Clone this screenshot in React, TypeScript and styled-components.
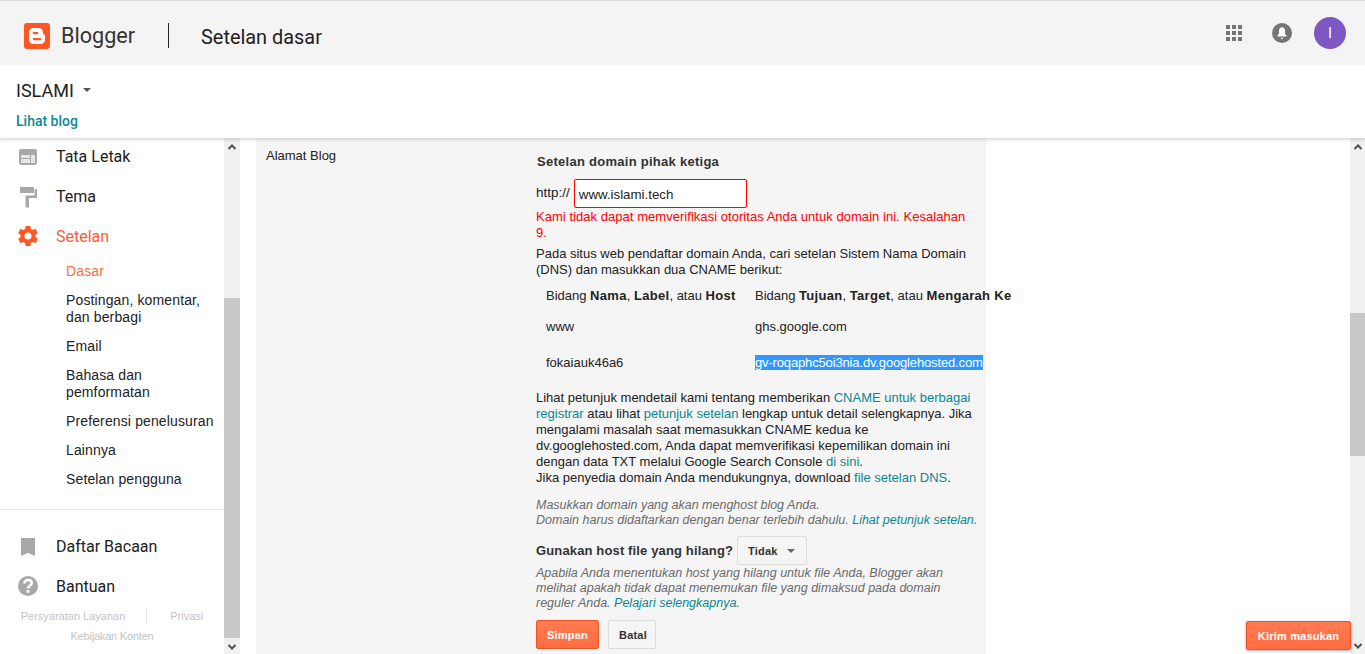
import { createGlobalStyle, styled } from "styled-components";

const GlobalStyle = createGlobalStyle`
  html, body {
    margin: 0;
    padding: 0;
    height: 100%;
    overflow: hidden;
    background: #fff;
  }
  #root {
    height: 100%;
  }
  * {
    box-sizing: border-box;
  }
`;

const Page = styled.div`
  height: 654px;
  display: flex;
  flex-direction: column;
  position: relative;
  overflow: hidden;
  font-family: "Liberation Sans", Arial, sans-serif;
  color: #222;
`;

const TopBar = styled.header`
  height: 65px;
  flex: none;
  display: flex;
  align-items: center;
  background: #f4f4f4;
  border-top: 1px solid #ddd;
  padding: 0 19px 0 24px;
`;

const Brand = styled.div`
  display: flex;
  align-items: center;
  padding-top: 5px;
`;

const LogoName = styled.span`
  font: 400 21.6px Roboto, sans-serif;
  color: #333;
  margin-left: 11px;
`;

const TitleDivider = styled.span`
  width: 1px;
  height: 25px;
  background: #222;
  margin-left: 33px;
`;

const PageTitle = styled.h1`
  margin: 3px 0 0 32px;
  font: 400 19.9px Roboto, sans-serif;
  color: #212121;
`;

const TopActions = styled.div`
  margin-left: auto;
  display: flex;
  align-items: center;
  gap: 30px;
`;

const Avatar = styled.div`
  width: 32px;
  height: 32px;
  border-radius: 50%;
  background: #7e57c2;
  color: #fff;
  font: 400 15px Roboto, sans-serif;
  display: flex;
  align-items: center;
  justify-content: center;
  margin-left: -8px;
`;

const SubHeader = styled.div`
  height: 73px;
  flex: none;
  background: #fff;
  box-shadow: 0 2px 3px rgba(0, 0, 0, 0.14);
  padding: 13px 16px 0;
  position: relative;
  z-index: 2;
`;

const BlogPicker = styled.div`
  display: flex;
  align-items: center;
  gap: 9px;
  font: 400 18px Roboto, sans-serif;
  color: #222;
  height: 24px;
`;

const Caret = styled.span<{ $color?: string }>`
  width: 0;
  height: 0;
  border-left: 4px solid transparent;
  border-right: 4px solid transparent;
  border-top: 4px solid ${(p) => p.$color ?? "#555"};
`;

const ViewLink = styled.a`
  display: block;
  margin-top: 11px;
  font: 500 14px Roboto, sans-serif;
  color: #0d8a94;
`;

const Body = styled.div`
  flex: 1;
  min-height: 0;
  display: flex;
`;

const Sidebar = styled.nav`
  width: 224px;
  flex: none;
  display: flex;
  flex-direction: column;
`;

const NavItem = styled.div<{ $active?: boolean }>`
  height: 40px;
  display: flex;
  align-items: center;
  gap: 16px;
  padding-left: 16px;
  font: 400 16px Roboto, sans-serif;
  color: ${(p) => (p.$active ? "#ff5a36" : "#212121")};
`;

const IconSlot = styled.span`
  width: 24px;
  height: 24px;
  flex: none;
  display: flex;
`;

const NavTop = styled.div`
  margin-top: -2px;
`;

const SubNav = styled.div`
  padding: 7px 0 0 66px;
  display: flex;
  flex-direction: column;
  gap: 12px;
`;

const SubItem = styled.div<{ $active?: boolean }>`
  font: 14px/17px "Liberation Sans", Arial, sans-serif;
  letter-spacing: 0.13px;
  color: ${(p) => (p.$active ? "#ff6d42" : "#222")};
`;

const SideRule = styled.div`
  height: 1px;
  background: #e8e8e8;
  margin-top: 21px;
  margin-bottom: 16px;
`;

const LegalRow = styled.div<{ $spacing: number }>`
  display: flex;
  justify-content: center;
  align-items: center;
  font: 11px "Liberation Sans", Arial, sans-serif;
  letter-spacing: ${(p) => p.$spacing}px;
  color: #c4c4c4;
  height: 20px;
`;

const LegalDivider = styled.span`
  width: 1px;
  height: 14px;
  background: #e4e4e4;
  margin: 0 23px 0 21px;
`;

const Scrollbar = styled.div<{ $width: number }>`
  width: ${(p) => p.$width}px;
  flex: none;
  background: #f1f1f1;
  display: flex;
  flex-direction: column;
`;

const ScrollArrow = styled.div`
  height: 17px;
  flex: none;
  display: flex;
  align-items: center;
  justify-content: center;
`;

const ScrollTrack = styled.div`
  flex: 1;
  display: flex;
  flex-direction: column;
`;

const ScrollSpace = styled.div<{ $size: number }>`
  height: ${(p) => p.$size}px;
  flex: none;
`;

const ScrollThumb = styled.div<{ $size: number }>`
  height: ${(p) => p.$size}px;
  flex: none;
  background: #c8c8c8;
`;

const Main = styled.main`
  flex: 1;
  min-width: 0;
  padding-left: 16px;
`;

const Panel = styled.section`
  width: 730px;
  height: 100%;
  background: #f5f5f5;
  display: grid;
  grid-template-columns: 280px 450px;
  font: 13px/16px "Liberation Sans", Arial, sans-serif;
`;

const FieldLabel = styled.div`
  padding: 10px 0 0 10px;
  font-size: 13px;
  color: #222;
`;

const FieldBody = styled.div`
  padding-top: 16px;
  color: #222;
`;

const DomainHeading = styled.h2`
  margin: 0 0 0 1px;
  font: 700 13px/16px "Liberation Sans", Arial, sans-serif;
  letter-spacing: 0.27px;
  color: #333;
`;

const UrlRow = styled.div`
  margin-top: 9px;
  display: flex;
  align-items: flex-start;
  gap: 4px;
  height: 29px;
  line-height: 18px;
  font-size: 13.5px;
`;

const UrlPrefix = styled.span`
  padding-top: 5px;
`;

const DomainInput = styled.div`
  width: 173px;
  height: 29px;
  background: #fff;
  border: 1px solid #f00;
  border-radius: 2px;
  padding: 7px 4px 0;
  font-size: 13.3px;
  line-height: 16px;
  color: #222;
`;

const ErrorText = styled.p`
  margin: 1px 0 0;
  color: #f00;
  width: 440px;
  letter-spacing: 0.04px;
`;

const Para = styled.p`
  margin: 5px 0 0;
  width: 440px;
`;

const DnsTable = styled.div`
  margin-top: 10px;
  padding-left: 10px;
  display: grid;
  grid-template-columns: 209px max-content;
  grid-template-rows: 31px 36px 31px;
`;

const DnsCell = styled.div`
  white-space: nowrap;

  b {
    letter-spacing: 0.3px;
  }
`;

const Selected = styled.span`
  background: #3297fd;
  color: #fff;
  letter-spacing: -0.15px;
`;

const Link = styled.a`
  color: #0b8793;
`;

const Instructions = styled.p`
  margin: 4px 0 0;
  width: 440px;
`;

const Hint = styled.p<{ $gap: number }>`
  margin: ${(p) => p.$gap}px 0 0;
  width: 442px;
  font-size: 12.5px;
  line-height: 15px;
  font-style: italic;
  color: #6b6b6b;
`;

const HostRow = styled.div`
  margin-top: 8px;
  display: flex;
  align-items: center;
  gap: 4px;
  font: 700 13px/16px "Liberation Sans", Arial, sans-serif;
  letter-spacing: 0.14px;
  color: #333;
`;

const Button = styled.button<{ $primary?: boolean }>`
  height: 29px;
  padding: 0 10px;
  font: 700 11px "Liberation Sans", Arial, sans-serif;
  letter-spacing: 0.2px;
  border-radius: 2px;
  border: 1px solid ${(p) => (p.$primary ? "#f4511e" : "#dcdcdc")};
  background: ${(p) => (p.$primary ? "linear-gradient(#ff7b52, #ff6d42)" : "#f5f5f5")};
  color: ${(p) => (p.$primary ? "#fff" : "#333")};
`;

const SelectButton = styled(Button)`
  width: 70px;
  display: flex;
  align-items: center;
  gap: 9px;
`;

const Actions = styled.div`
  margin-top: 9px;
  display: flex;
  gap: 9px;
`;

const PrimaryWide = styled(Button)`
  width: 63px;
`;

const SecondaryWide = styled(Button)`
  width: 48px;
`;

const Gutter = styled.div`
  width: 364px;
  flex: none;
`;

const FeedbackButton = styled.button`
  position: absolute;
  right: 14px;
  bottom: 4px;
  width: 105px;
  height: 29px;
  border: 1px solid #f4511e;
  border-radius: 2px;
  background: linear-gradient(#ff7b52, #ff6d42);
  box-shadow: 0 1px 3px rgba(0, 0, 0, 0.35);
  color: #fff;
  font: 700 11px "Liberation Sans", Arial, sans-serif;
  letter-spacing: 0.2px;
`;

function Chevron({ up }: { up?: boolean }) {
  return (
    <svg width="10" height="8" viewBox="0 0 10 8">
      <path d={up ? "M1.5 6 5 2.5 8.5 6" : "M1.5 2 5 5.5 8.5 2"} fill="none" stroke="#505050" strokeWidth="2" />
    </svg>
  );
}

function BloggerLogo() {
  return (
    <svg width="26" height="26" viewBox="0 0 26 26">
      <rect width="26" height="26" rx="3" fill="#ff5722" />
      <path
        fill="#fff"
        fillRule="evenodd"
        d="M9.5 5h5c2.6 0 4.5 1.9 4.5 4.2v1.1c0 .6.4 1 1 1.1.6.1 1 .5 1 1.1v4.3c0 2.4-2 4.2-4.5 4.2h-7C7 21 5 19.2 5 16.8V9.4C5 7 7 5 9.5 5ZM9.8 9a1 1 0 0 0 0 2.2h3.5a1.1 1.1 0 0 0 0-2.2ZM9.8 15a1 1 0 0 0 0 2.2h6.4a1.1 1.1 0 0 0 0-2.2Z"
      />
    </svg>
  );
}

function AppsIcon() {
  const cells = [0, 1, 2].flatMap((r) => [0, 1, 2].map((c) => [c * 6, r * 6]));
  return (
    <svg width="16" height="16" viewBox="0 0 16 16">
      {cells.map(([x, y]) => (
        <rect key={`${x}-${y}`} x={x} y={y} width="4" height="4" fill="#757575" />
      ))}
    </svg>
  );
}

function BellIcon() {
  return (
    <svg width="20" height="20" viewBox="0 0 20 20">
      <circle cx="10" cy="10" r="10" fill="#757575" />
      <path
        fill="#fff"
        d="M10 4.2c-1.8 0-3 1.4-3 3.3v3.3l-1.5 2v.7h9v-.7l-1.5-2V7.5c0-1.9-1.2-3.3-3-3.3ZM8.8 14.8a1.2 1.2 0 0 0 2.4 0Z"
      />
    </svg>
  );
}

function LayoutIcon() {
  return (
    <IconSlot>
      <svg width="24" height="24" viewBox="0 0 24 24">
        <rect x="3" y="5" width="18" height="16" rx="2" fill="#a8a8a8" />
        <rect x="5" y="11" width="9" height="3" fill="#e6e6e6" />
        <rect x="5" y="15" width="9" height="4" fill="#e6e6e6" />
        <rect x="15" y="11" width="4" height="8" fill="#e6e6e6" />
      </svg>
    </IconSlot>
  );
}

function ThemeIcon() {
  return (
    <IconSlot>
      <svg width="24" height="24" viewBox="0 0 24 24">
        <path fill="#a8a8a8" d="M4 3h14v6H4ZM19 5h2v9h-8v9.5H9.5V11.5h9V6H19Z" />
      </svg>
    </IconSlot>
  );
}

function GearIcon() {
  return (
    <IconSlot>
      <svg width="24" height="24" viewBox="0 0 24 24">
        <path
          fill="#ff5722"
          d="M19.43 12.98c.04-.32.07-.64.07-.98s-.03-.66-.07-.98l2.11-1.65c.19-.15.24-.42.12-.64l-2-3.46c-.12-.22-.39-.3-.61-.22l-2.49 1c-.52-.4-1.08-.73-1.69-.98l-.38-2.65A.488.488 0 0 0 14 2h-4c-.25 0-.46.18-.49.42l-.38 2.65c-.61.25-1.17.59-1.69.98l-2.49-1c-.23-.09-.49 0-.61.22l-2 3.46c-.13.22-.07.49.12.64l2.11 1.65c-.04.32-.07.65-.07.98s.03.66.07.98l-2.11 1.65c-.19.15-.24.42-.12.64l2 3.46c.12.22.39.3.61.22l2.49-1c.52.4 1.08.73 1.69.98l.38 2.65c.03.24.24.42.49.42h4c.25 0 .46-.18.49-.42l.38-2.65c.61-.25 1.17-.59 1.69-.98l2.49 1c.23.09.49 0 .61-.22l2-3.46c.12-.22.07-.49-.12-.64l-2.11-1.65ZM12 15.5a3.5 3.5 0 1 1 0-7 3.5 3.5 0 0 1 0 7Z"
        />
      </svg>
    </IconSlot>
  );
}

function BookmarkIcon() {
  return (
    <IconSlot>
      <svg width="24" height="24" viewBox="0 0 24 24">
        <path fill="#a8a8a8" d="M5 4h14v18l-7-3-7 3Z" />
      </svg>
    </IconSlot>
  );
}

function HelpIcon() {
  return (
    <IconSlot>
      <svg width="24" height="24" viewBox="0 0 24 24">
        <circle cx="12" cy="12" r="10" fill="#a8a8a8" />
        <path fill="none" stroke="#fff" strokeWidth="2.6" d="M8.3 9.5C8.5 7.3 10 6 12.1 6c2.1 0 3.6 1.3 3.6 3.1 0 2.6-3.7 2.7-3.7 5.4" />
        <rect x="10.6" y="16" width="2.8" height="2.8" fill="#fff" />
      </svg>
    </IconSlot>
  );
}

export default function App() {
  return (
    <Page>
      <GlobalStyle />
      <TopBar>
        <Brand>
          <BloggerLogo />
          <LogoName>Blogger</LogoName>
          <TitleDivider />
          <PageTitle>Setelan dasar</PageTitle>
        </Brand>
        <TopActions>
          <AppsIcon />
          <BellIcon />
          <Avatar>I</Avatar>
        </TopActions>
      </TopBar>
      <SubHeader>
        <BlogPicker>
          ISLAMI
          <Caret />
        </BlogPicker>
        <ViewLink>Lihat blog</ViewLink>
      </SubHeader>
      <Body>
        <Sidebar>
          <NavTop>
            <NavItem>
              <LayoutIcon />
              Tata Letak
            </NavItem>
            <NavItem>
              <ThemeIcon />
              Tema
            </NavItem>
            <NavItem $active>
              <GearIcon />
              Setelan
            </NavItem>
          </NavTop>
          <SubNav>
            <SubItem $active>Dasar</SubItem>
            <SubItem>
              Postingan, komentar,
              <br />
              dan berbagi
            </SubItem>
            <SubItem>Email</SubItem>
            <SubItem>
              Bahasa dan
              <br />
              pemformatan
            </SubItem>
            <SubItem>Preferensi penelusuran</SubItem>
            <SubItem>Lainnya</SubItem>
            <SubItem>Setelan pengguna</SubItem>
          </SubNav>
          <SideRule />
          <NavItem>
            <BookmarkIcon />
            Daftar Bacaan
          </NavItem>
          <NavItem>
            <HelpIcon />
            Bantuan
          </NavItem>
          <LegalRow $spacing={0}>
            Persyaratan Layanan
            <LegalDivider />
            Privasi
          </LegalRow>
          <LegalRow $spacing={-0.2}>Kebijakan Konten</LegalRow>
        </Sidebar>
        <Scrollbar $width={16}>
          <ScrollArrow>
            <Chevron up />
          </ScrollArrow>
          <ScrollTrack>
            <ScrollSpace $size={143} />
            <ScrollThumb $size={340} />
          </ScrollTrack>
          <ScrollArrow>
            <Chevron />
          </ScrollArrow>
        </Scrollbar>
        <Main>
          <Panel>
            <FieldLabel>Alamat Blog</FieldLabel>
            <FieldBody>
              <DomainHeading>Setelan domain pihak ketiga</DomainHeading>
              <UrlRow>
                <UrlPrefix>http://</UrlPrefix>
                <DomainInput>www.islami.tech</DomainInput>
              </UrlRow>
              <ErrorText>Kami tidak dapat memverifikasi otoritas Anda untuk domain ini. Kesalahan 9.</ErrorText>
              <Para>Pada situs web pendaftar domain Anda, cari setelan Sistem Nama Domain (DNS) dan masukkan dua CNAME berikut:</Para>
              <DnsTable>
                <DnsCell>
                  Bidang <b>Nama</b>, <b>Label</b>, atau <b>Host</b>
                </DnsCell>
                <DnsCell>
                  Bidang <b>Tujuan</b>, <b>Target</b>, atau <b>Mengarah Ke</b>
                </DnsCell>
                <DnsCell>www</DnsCell>
                <DnsCell>ghs.google.com</DnsCell>
                <DnsCell>fokaiauk46a6</DnsCell>
                <DnsCell>
                  <Selected>gv-roqaphc5oi3nia.dv.googlehosted.com</Selected>
                </DnsCell>
              </DnsTable>
              <Instructions>
                Lihat petunjuk mendetail kami tentang memberikan <Link>CNAME untuk berbagai registrar</Link> atau lihat <Link>petunjuk setelan</Link> lengkap untuk detail selengkapnya. Jika mengalami masalah saat memasukkan CNAME kedua ke dv.googlehosted.com, Anda dapat memverifikasi kepemilikan domain ini dengan data TXT melalui Google Search Console <Link>di sini</Link>.
                <br />
                Jika penyedia domain Anda mendukungnya, download <Link>file setelan DNS</Link>.
              </Instructions>
              <Hint $gap={12}>
                Masukkan domain yang akan menghost blog Anda.
                <br />
                Domain harus didaftarkan dengan benar terlebih dahulu. <Link>Lihat petunjuk setelan.</Link>
              </Hint>
              <HostRow>
                Gunakan host file yang hilang?
                <SelectButton>
                  Tidak
                  <Caret $color="#666" />
                </SelectButton>
              </HostRow>
              <Hint $gap={1}>
                Apabila Anda menentukan host yang hilang untuk file Anda, Blogger akan melihat apakah tidak dapat menemukan file yang dimaksud pada domain reguler Anda. <Link>Pelajari selengkapnya.</Link>
              </Hint>
              <Actions>
                <PrimaryWide $primary>Simpan</PrimaryWide>
                <SecondaryWide>Batal</SecondaryWide>
              </Actions>
            </FieldBody>
          </Panel>
        </Main>
        <Gutter />
        <Scrollbar $width={15}>
          <ScrollArrow>
            <Chevron up />
          </ScrollArrow>
          <ScrollTrack>
            <ScrollSpace $size={158} />
            <ScrollThumb $size={143} />
          </ScrollTrack>
          <ScrollArrow>
            <Chevron />
          </ScrollArrow>
        </Scrollbar>
      </Body>
      <FeedbackButton>Kirim masukan</FeedbackButton>
    </Page>
  );
}
